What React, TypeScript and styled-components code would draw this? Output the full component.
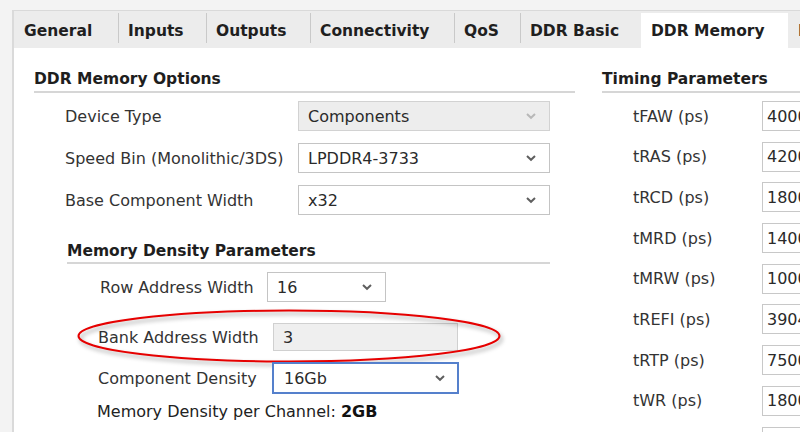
import React from "react";
import styled, { createGlobalStyle, css } from "styled-components";

const GlobalStyle = createGlobalStyle`
	html, body {
		margin: 0;
		padding: 0;
		width: 800px;
		height: 432px;
		overflow: hidden;
		background-color: #f3f3f3;
		font-family: "DejaVu Sans", "Noto Sans", sans-serif;
	}
`;

const Frame = styled.div`
	width: 800px;
	height: 432px;
	box-sizing: border-box;
	padding: 10px 0 0 12px;
	overflow: hidden;
`;

const Panel = styled.div`
	height: 100%;
	background-color: #ffffff;
	border-top: 1px solid #d9d9d9;
	border-left: 2px solid #dadada;
	overflow: hidden;
`;

const TabBar = styled.div`
	display: flex;
	height: 37px;
	background-color: #ececec;
	padding-top: 1px;
	box-sizing: border-box;
`;

const Tab = styled.div<{ $w: number; $active?: boolean; $noSep?: boolean }>`
	position: relative;
	flex: 0 0 auto;
	width: ${(p) => p.$w}px;
	box-sizing: border-box;
	padding: 2px 0 0 10px;
	display: flex;
	align-items: center;
	font-size: 15.5px;
	font-weight: 700;
	color: #1f1f1f;
	white-space: nowrap;
	&::before {
		content: "";
		position: absolute;
		left: 0;
		top: 1px;
		bottom: 5px;
		width: 1px;
		background-color: #c9c9c9;
		display: ${(p) => (p.$noSep ? "none" : "block")};
	}
	${(p) =>
		p.$active &&
		css`
			background-color: #ffffff;
			margin-top: 1px;
			padding-top: 1px;
		`}
`;

const Content = styled.div`
	display: flex;
	gap: 27px;
	padding: 19px 0 0 20px;
`;

const LeftColumn = styled.div`
	flex: 0 0 541px;
`;

const RightColumn = styled.div`
	flex: 0 0 260px;
`;

const SectionTitle = styled.div`
	font-size: 15.5px;
	font-weight: 700;
	line-height: 20px;
	color: #1e1e1e;
	padding: 2px 0 2px;
	border-bottom: 2px solid #d6d6d6;
	white-space: nowrap;
`;

const Rows = styled.div<{ $gap: number }>`
	display: flex;
	flex-direction: column;
	gap: ${(p) => p.$gap}px;
	margin-top: 8px;
`;

const Row = styled.div<{ $h?: number; $top?: number }>`
	position: relative;
	display: flex;
	align-items: center;
	height: ${(p) => p.$h ?? 30}px;
	margin-top: ${(p) => p.$top ?? 0}px;
`;

const Label = styled.span<{ $w: number; $indent: number }>`
	flex: 0 0 auto;
	box-sizing: border-box;
	width: ${(p) => p.$w}px;
	padding-left: ${(p) => p.$indent}px;
	font-size: 16px;
	color: #333333;
	white-space: nowrap;
`;

const Select = styled.div<{ $w: number; $disabled?: boolean; $focus?: boolean }>`
	box-sizing: border-box;
	width: ${(p) => p.$w}px;
	height: 100%;
	display: flex;
	align-items: center;
	justify-content: space-between;
	padding: 0 12px 0 9px;
	font-size: 16px;
	color: #2a2a2a;
	background-color: ${(p) => (p.$disabled ? "#ededed" : "#ffffff")};
	border: 1px solid ${(p) => (p.$disabled ? "#d2d2d2" : "#c4c4c4")};
	${(p) =>
		p.$focus &&
		css`
			border: 2px solid #5580cc;
			padding: 0 11px 0 10px;
		`}
`;

const Field = styled.div<{ $w: number; $disabled?: boolean }>`
	box-sizing: border-box;
	width: ${(p) => p.$w}px;
	height: 100%;
	display: flex;
	align-items: center;
	padding-left: ${(p) => (p.$disabled ? 9 : 4)}px;
	font-size: 16px;
	color: #2a2a2a;
	white-space: nowrap;
	overflow: hidden;
	background-color: ${(p) => (p.$disabled ? "#efefef" : "#ffffff")};
	border: 1px solid ${(p) => (p.$disabled ? "#d0d0d0" : "#c8c8c8")};
`;

const SubSection = styled.div`
	margin: 24px 0 0 33px;
	width: 483px;
`;

const SubTitle = styled(SectionTitle)`
	padding: 2px 0 1px;
`;

const Summary = styled.div`
	margin-top: 8px;
	padding-left: 30px;
	font-size: 16px;
	line-height: 20px;
	color: #222222;
	white-space: nowrap;
	b {
		color: #111111;
	}
`;

const Highlight = styled.svg`
	position: absolute;
	left: 10px;
	top: -14px;
	overflow: visible;
	filter: drop-shadow(2px 3px 2px rgba(0, 0, 0, 0.35));
	pointer-events: none;
`;

function Chevron({ light }: { light?: boolean }) {
	return (
		<svg width="12" height="8" viewBox="0 0 12 8">
			<polyline
				points="2,2 6,5.8 10,2"
				fill="none"
				stroke={light ? "#b8b8b8" : "#5f5f5f"}
				strokeWidth="2"
			/>
		</svg>
	);
}

const tabs = [
	{ name: "General", w: 104 },
	{ name: "Inputs", w: 88 },
	{ name: "Outputs", w: 104 },
	{ name: "Connectivity", w: 144 },
	{ name: "QoS", w: 66 },
	{ name: "DDR Basic", w: 121 },
	{ name: "DDR Memory", w: 147, active: true },
	{ name: "DDR Address", w: 140 },
];

const timings = [
	["tFAW (ps)", "40000"],
	["tRAS (ps)", "42000"],
	["tRCD (ps)", "18000"],
	["tMRD (ps)", "14000"],
	["tMRW (ps)", "10000"],
	["tREFI (ps)", "3904000"],
	["tRTP (ps)", "7500"],
	["tWR (ps)", "18000"],
	["tWTR (ps)", "10000"],
];

export default function App() {
	return (
		<>
			<GlobalStyle />
			<Frame>
				<Panel>
					<TabBar>
						{tabs.map((t, i) => (
							<Tab
								key={t.name}
								$w={t.w}
								$active={t.active}
								$noSep={i === 0 || t.active || (i > 0 && tabs[i - 1].active)}
							>
								{t.name}
							</Tab>
						))}
					</TabBar>
					<Content>
						<LeftColumn>
							<SectionTitle>DDR Memory Options</SectionTitle>
							<Rows $gap={12}>
								<Row>
									<Label $w={264} $indent={31}>Device Type</Label>
									<Select $w={252} $disabled>
										Components
										<Chevron light />
									</Select>
								</Row>
								<Row>
									<Label $w={264} $indent={31}>Speed Bin (Monolithic/3DS)</Label>
									<Select $w={252}>
										LPDDR4-3733
										<Chevron />
									</Select>
								</Row>
								<Row>
									<Label $w={264} $indent={31}>Base Component Width</Label>
									<Select $w={252}>
										x32
										<Chevron />
									</Select>
								</Row>
							</Rows>
							<SubSection>
								<SubTitle>Memory Density Parameters</SubTitle>
								<Row $top={8}>
									<Label $w={200} $indent={33}>Row Address Width</Label>
									<Select $w={119}>
										16
										<Chevron />
									</Select>
								</Row>
								<Row $h={28} $top={21}>
									<Label $w={206} $indent={31}>Bank Address Width</Label>
									<Field $w={185} $disabled>3</Field>
									<Highlight width="424" height="54" viewBox="0 0 424 54">
										<ellipse
											cx="212"
											cy="27"
											rx="210.5"
											ry="25.5"
											fill="none"
											stroke="#e60000"
											strokeWidth="2"
										/>
									</Highlight>
								</Row>
								<Row $h={32} $top={11}>
									<Label $w={205} $indent={31}>Component Density</Label>
									<Select $w={187} $focus>
										16Gb
										<Chevron />
									</Select>
								</Row>
								<Summary>
									Memory Density per Channel: <b>2GB</b>
								</Summary>
							</SubSection>
						</LeftColumn>
						<RightColumn>
							<SectionTitle>Timing Parameters</SectionTitle>
							<Rows $gap={10.7}>
								{timings.map(([name, value]) => (
									<Row key={name}>
										<Label $w={160} $indent={31}>{name}</Label>
										<Field $w={100}>{value}</Field>
									</Row>
								))}
							</Rows>
						</RightColumn>
					</Content>
				</Panel>
			</Frame>
		</>
	);
}
